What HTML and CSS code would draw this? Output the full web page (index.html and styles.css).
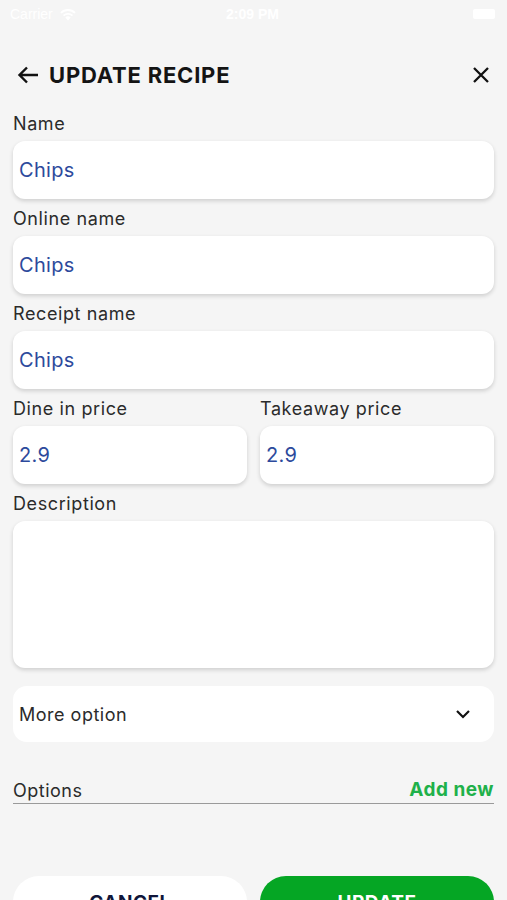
FILE: index.html
```html
<!DOCTYPE html>
<html lang="en">
<head>
    <meta charset="UTF-8">
    <meta name="viewport" content="width=device-width, initial-scale=1.0">
    <title>Update Recipe</title>
    <link rel="stylesheet" href="styles.css">
</head>
<body>
    <div class="status-bar">
        <div class="status-left">
            <span>Carrier</span>
            <svg width="18" height="13" viewBox="0 0 18 13"><path d="M9 12.5 L6.3 9.4 A4 4 0 0 1 11.7 9.4 Z M3.9 6.9 A7.5 7.5 0 0 1 14.1 6.9 L12.8 8.3 A5.6 5.6 0 0 0 5.2 8.3 Z M1.3 4.2 A11 11 0 0 1 16.7 4.2 L15.4 5.6 A9.1 9.1 0 0 0 2.6 5.6 Z" fill="#fff"/></svg>
        </div>
        <span class="status-time">2:09 PM</span>
        <div class="battery"></div>
    </div>

    <div class="header">
        <svg class="icon-back" width="22" height="18" viewBox="0 0 22 18"><path d="M21 9 H2.5 M10 1.5 L2.5 9 L10 16.5" fill="none" stroke="#111" stroke-width="2.4"/></svg>
        <h1>UPDATE RECIPE</h1>
        <svg class="icon-close" width="18" height="18" viewBox="0 0 18 18"><path d="M2 2 L16 16 M16 2 L2 16" fill="none" stroke="#111" stroke-width="2.3"/></svg>
    </div>

    <form class="form">
        <label class="label">Name</label>
        <div class="input">Chips</div>

        <label class="label">Online name</label>
        <div class="input">Chips</div>

        <label class="label">Receipt name</label>
        <div class="input">Chips</div>

        <div class="row">
            <div class="col">
                <label class="label">Dine in price</label>
                <div class="input">2.9</div>
            </div>
            <div class="col">
                <label class="label">Takeaway price</label>
                <div class="input">2.9</div>
            </div>
        </div>

        <label class="label">Description</label>
        <div class="input textarea"></div>

        <div class="more">
            <span>More option</span>
            <svg width="16" height="10" viewBox="0 0 16 10"><path d="M2 2 L8 8 L14 2" fill="none" stroke="#111" stroke-width="2.2"/></svg>
        </div>

        <div class="options">
            <span>Options</span>
            <a class="add-new">Add new</a>
        </div>

        <div class="buttons">
            <button type="button" class="btn cancel">CANCEL</button>
            <button type="button" class="btn update">UPDATE</button>
        </div>
    </form>
</body>
</html>
```

FILE: styles.css
```css
body {
    margin: 0;
    background-color: #f5f5f5;
    font-family: "Inter", "Noto Sans", sans-serif;
    color: #2b2b2b;
    width: 507px;
    height: 900px;
    overflow: hidden;
}

.status-bar {
    height: 28px;
    display: flex;
    align-items: center;
    justify-content: space-between;
    padding: 0 12px 0 10px;
    color: #fff;
    font-size: 14px;
    font-family: "Liberation Sans", sans-serif;
}

.status-left {
    display: flex;
    align-items: center;
    gap: 6px;
    width: 90px;
}

.status-time {
    font-weight: bold;
}

.battery {
    width: 22px;
    height: 10px;
    background: #fff;
    border-radius: 2px;
    margin-left: 68px;
}

.header {
    display: flex;
    align-items: center;
    height: 44px;
    margin-top: 25px;
    padding: 0 17px 0 17px;
}

.icon-back {
    margin-right: 10px;
}

.header h1 {
    flex: 1;
    margin: 0;
    font-size: 22px;
    font-weight: 700;
    color: #141414;
    letter-spacing: 0.8px;
}

.form {
    padding: 0 13px;
    margin-top: 15px;
}

.label {
    display: block;
    font-size: 18px;
    line-height: 24px;
    letter-spacing: 0.6px;
    margin: 8px 0 5px;
    color: #2b2b2b;
}

.form > .label:first-child {
    margin-top: 0;
}

.input {
    height: 58px;
    background: #fff;
    border-radius: 12px;
    box-shadow: 0 2px 4px rgba(0, 0, 0, 0.16);
    display: flex;
    align-items: center;
    padding: 0 6px;
    font-size: 20px;
    letter-spacing: 0.3px;
    color: #2d4a9c;
    box-sizing: border-box;
}

.textarea {
    height: 147px;
}

.row {
    display: flex;
    gap: 13px;
}

.col {
    flex: 1;
}

.more {
    margin-top: 18px;
    height: 56px;
    background: #fff;
    border-radius: 14px;
    display: flex;
    align-items: center;
    justify-content: space-between;
    padding: 0 23px 0 6px;
    font-size: 18px;
    letter-spacing: 0.5px;
}

.options {
    margin-top: 36px;
    display: flex;
    justify-content: space-between;
    align-items: flex-end;
    border-bottom: 1.5px solid #9a9a9a;
    padding-bottom: 2px;
    font-size: 18px;
    letter-spacing: 0.5px;
}

.add-new {
    color: #1fb14a;
    font-weight: 700;
    font-size: 19px;
    letter-spacing: 0.5px;
}

.buttons {
    display: flex;
    gap: 13px;
    margin-top: 72px;
}

.btn {
    flex: 1;
    height: 52px;
    border: none;
    border-radius: 26px;
    font-family: inherit;
    font-size: 19px;
    font-weight: 700;
    letter-spacing: 0.5px;
}

.cancel {
    background: #fff;
    color: #10163a;
}

.update {
    background: #05a624;
    color: #fff;
}
```
